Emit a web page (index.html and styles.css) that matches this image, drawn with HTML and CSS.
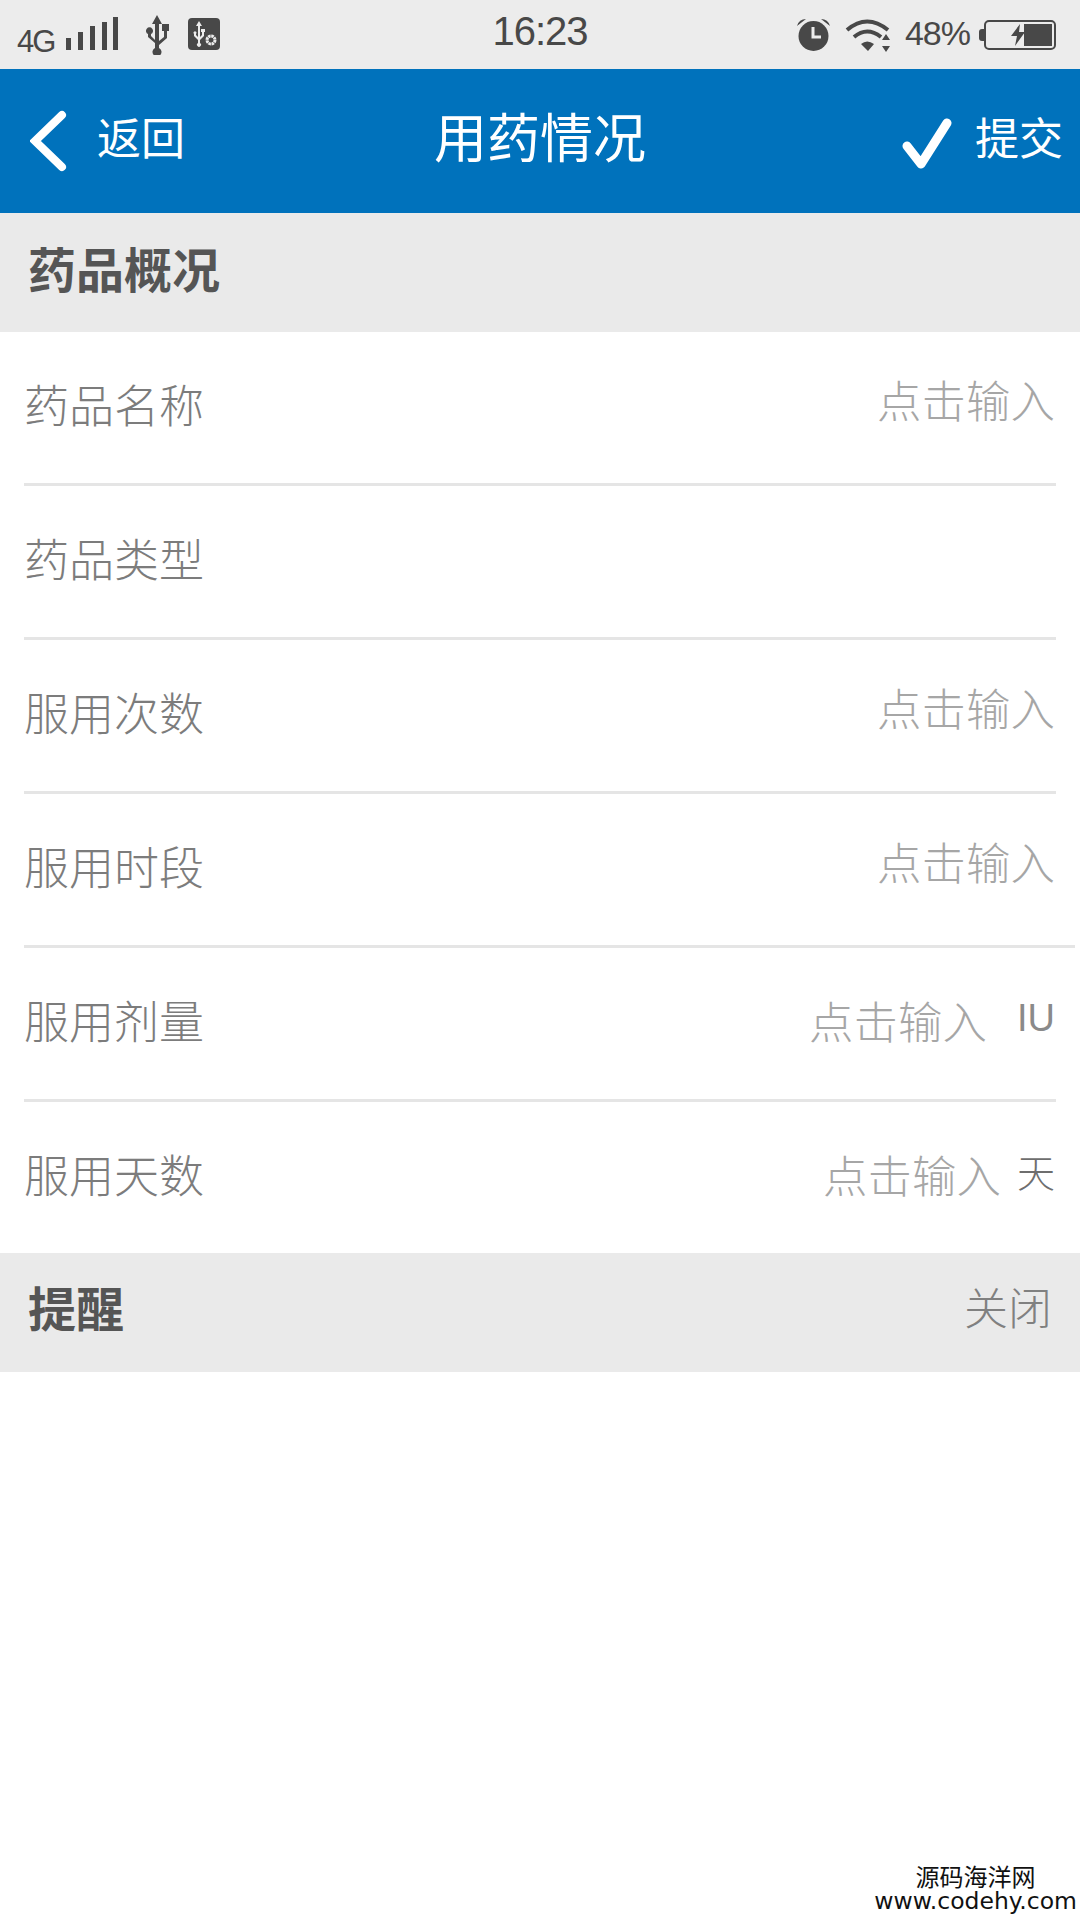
FILE: index.html
```html
<html>
<head>
  <meta charset="UTF-8">
  <title>用药情况</title>
  <link rel="stylesheet" href="styles.css">
</head>
<body>
<div class="status">
  <div class="status-left">
    <span class="net">4G</span>
    <svg class="sig" width="54" height="33" viewBox="0 0 54 33"><path fill="#484848" d="M1 21h5v12H1zM13 15h5v18h-5zM25 9h5v24h-5zM37 5h5v28h-5zM48 0h5v33h-5z"/></svg>
    <svg class="usb" width="26" height="40" viewBox="0 0 26 40"><path fill="#484848" d="M13 0l5 9h-3v17l5-4v-6h-2v-7h7v7h-2v7l-8 7v3a4.500 4.500 0 1 1-4 0v-5l-7-6v-3a3.500 3.500 0 1 1 3 0v2l4 4V9H8z"/></svg>
    <svg class="usbset" width="32" height="33" viewBox="0 0 32 33"><rect width="32" height="32" rx="4" fill="#484848"/><path fill="#ececec" d="M11 3l3 5h-2v11l2-2v-3h-1v-3h4v3h-1v4l-4 4v3a2 2 0 1 1-2 0v-3l-4-4v-2a1.500 1.500 0 1 1 2 0v1l2 2V8H8z"/><circle cx="23" cy="22" r="4" fill="none" stroke="#ececec" stroke-width="3" stroke-dasharray="2.500 .6"/></svg>
  </div>
  <div class="clock">16:23</div>
  <div class="status-right">
    <svg width="35" height="33" viewBox="0 0 35 33"><circle cx="17.500" cy="18" r="15" fill="#484848"/><path fill="#484848" d="M1 8q2-7 9-7zM34 8q-2-7-9-7z"/><path fill="none" stroke="#ececec" stroke-width="3" d="M17 9v10h8"/></svg>
    <svg class="wifi" width="46" height="34" viewBox="0 0 46 34"><g fill="none" stroke="#484848" stroke-width="4"><path d="M2 12q20-17 41 0"/><path d="M9 19q13-11 27 0"/></g><path fill="#484848" d="M16 26q6-5 13 0l-6 7zM41 16l4 6h-8zM41 34l4-6h-8z"/></svg>
    <span class="pct">48%</span>
    <div class="batt-nub"></div>
    <div class="batt">
      <svg class="bolt" width="14" height="22" viewBox="0 0 14 22"><path fill="#484848" d="M9 0L0 12h6l-2 10 10-14H8z"/></svg>
      <div class="batt-fill"></div>
    </div>
  </div>
</div>
<div class="nav">
  <div class="nav-left">
    <svg class="ico-back" width="38" height="62" viewBox="0 0 38 62"><path fill="none" stroke="#fff" stroke-width="8" stroke-linecap="round" d="M32 5L5 31l27 26"/></svg>
    <span class="nav-txt">返回</span>
  </div>
  <div class="nav-title">用药情况</div>
  <div class="nav-right">
    <svg class="ico-ok" width="50" height="52" viewBox="0 0 50 52"><path fill="none" stroke="#fff" stroke-width="9" stroke-linecap="round" stroke-linejoin="round" d="M5 28l14 18L45 5"/></svg>
    <span class="nav-txt">提交</span>
  </div>
</div>
<div class="section top"><b>药品概况</b></div>
<div class="row"><span class="label">药品名称</span><span class="hint">点击输入</span></div>
<div class="row"><span class="label">药品类型</span></div>
<div class="row"><span class="label">服用次数</span><span class="hint">点击输入</span></div>
<div class="row long"><span class="label">服用时段</span><span class="hint">点击输入</span></div>
<div class="row has-unit"><span class="label">服用剂量</span><span class="hint">点击输入</span><span class="unit iu">IU</span></div>
<div class="row has-unit last"><span class="label">服用天数</span><span class="hint">点击输入</span><span class="unit">天</span></div>
<div class="section remind"><b>提醒</b><span class="off">关闭</span></div>
<div class="mark"><div class="mark-name">源码海洋网</div><div class="mark-url">www.codehy.com</div></div>
</body>
</html>
```
FILE: styles.css
```css
* {
  box-sizing: border-box;
}

html, body {
  height: 100%;
}

body {
  margin: 0;
  background: #fff;
  font-family: "Liberation Sans", "Noto Sans CJK SC", sans-serif;
  position: relative;
  overflow: hidden;
}

.status {
  height: 69px;
  background: #ececec;
  color: #484848;
  display: flex;
  align-items: center;
  justify-content: space-between;
  padding: 0 24px 0 17px;
  position: relative;
}

.status-left, .status-right {
  display: flex;
  align-items: center;
}

.status-left {
  padding-top: 14px;
}

.net {
  font-size: 31px;
  letter-spacing: -2px;
  margin-right: 11px;
  line-height: 34px;
}

.sig {
  margin-right: 25px;
  margin-top: -16px;
}

.usb {
  margin-right: 18px;
  margin-top: -14px;
}

.usbset {
  margin-top: -14px;
}

.clock {
  position: absolute;
  left: 0;
  right: 0;
  top: 9px;
  text-align: center;
  font-size: 40px;
  line-height: 44px;
  letter-spacing: -1px;
}

.wifi {
  margin-left: 14px;
}

.pct {
  font-size: 34px;
  letter-spacing: -1px;
  margin-left: 14px;
  margin-bottom: 4px;
  line-height: 40px;
}

.batt-nub {
  width: 5px;
  height: 12px;
  background: #484848;
  border-radius: 3px 0 0 3px;
  margin-left: 9px;
}

.batt {
  width: 72px;
  height: 30px;
  border: 2px solid #484848;
  border-radius: 5px;
  padding: 2px;
  display: flex;
  justify-content: flex-end;
  align-items: center;
}

.batt-fill {
  width: 28px;
  height: 22px;
  background: #484848;
}

.bolt {
  margin-right: -1px;
}

.nav {
  height: 144px;
  background: #0072bc;
  color: #fff;
  display: flex;
  align-items: center;
  justify-content: space-between;
  padding: 0 17px 0 30px;
  position: relative;
}

.nav-left, .nav-right {
  display: flex;
  align-items: center;
}

.nav-txt {
  font-size: 44px;
  line-height: 50px;
  font-family: "Noto Sans CJK SC", sans-serif;
  margin-bottom: 10px;
}

.ico-back {
  margin-right: 29px;
}

.ico-ok {
  margin-right: 23px;
  margin-top: 6px;
}

.nav-title {
  position: absolute;
  left: 0;
  right: 0;
  top: 36px;
  text-align: center;
  font-size: 53px;
  line-height: 60px;
  font-family: "Noto Sans CJK SC", sans-serif;
}

.section {
  height: 118px;
  background: #eaeaea;
  display: flex;
  align-items: center;
  justify-content: space-between;
  padding: 0 28px 12px;
  font-family: "Noto Sans CJK SC", sans-serif;
  color: #555;
  font-size: 48px;
}

.top {
  height: 119px;
}

.remind {
  height: 119px;
  padding-bottom: 14px;
}

.off {
  font-size: 44px;
  color: #808080;
  font-weight: 300;
}

.row {
  height: 154px;
  margin: 0 24px;
  border-bottom: 3px solid #e5e5e5;
  display: flex;
  align-items: center;
  font-family: "Noto Sans CJK SC", sans-serif;
  font-weight: 300;
  padding: 0 1px 9px 0;
}

.long {
  margin-right: 5px;
  padding-right: 20px;
}

.last {
  border-bottom: 0;
  height: 151px;
}

.label {
  font-size: 45px;
  color: #7c7c7c;
  margin-right: auto;
}

.hint {
  font-size: 44.500px;
  color: #a6a6a6;
  margin-bottom: 10px;
}

.has-unit .hint {
  margin-bottom: 0;
}

.unit {
  font-size: 38px;
  color: #6e6e6e;
  margin-left: 16px;
  margin-bottom: 5px;
}

.iu {
  font-family: "Liberation Sans", sans-serif;
  color: #8a8a8a;
  margin-left: 30px;
  margin-bottom: 1px;
}

.mark {
  position: absolute;
  right: 3px;
  bottom: 8px;
  text-align: center;
  color: #111;
  font-family: "DejaVu Sans", "Noto Sans CJK SC", sans-serif;
}

.mark-name {
  font-size: 24px;
  line-height: 24px;
}

.mark-url {
  font-size: 23.500px;
  line-height: 22px;
}
```
